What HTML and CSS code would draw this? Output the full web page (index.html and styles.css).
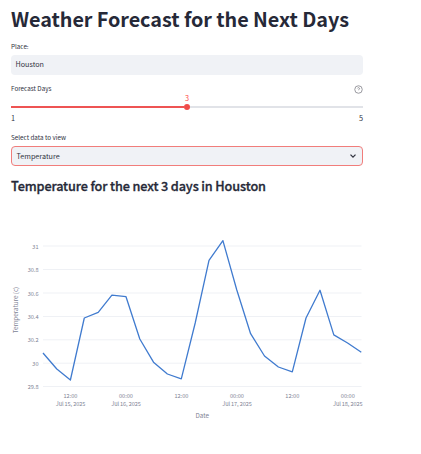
FILE: index.html
```html
<!DOCTYPE html>
<html lang="en">
<head>
<meta charset="utf-8">
<title>Weather Forecast</title>
<link rel="stylesheet" href="styles.css">
</head>
<body>
<main class="page">
  <h1 class="title"><svg class="fit" width="340" height="32"><text x="0" y="22.3" textLength="338">Weather Forecast for the Next Days</text></svg></h1>
  <label class="label" for="place">Place:</label>
  <div class="input" id="place">Houston</div>
  <div class="label-row">
    <span class="label">Forecast Days</span>
    <svg class="help" viewBox="0 0 24 24"><circle cx="12" cy="12" r="10"/><path d="M9.1 9a3 3 0 0 1 5.8 1c0 2-3 3-3 3M12 17h.01"/></svg>
  </div>
  <div class="slider">
    <span class="value">3</span>
    <div class="track"><div class="done"></div><div class="thumb"></div><div class="rest"></div></div>
    <div class="ends"><span>1</span><span>5</span></div>
  </div>
  <div class="label select-label">Select data to view</div>
  <div class="input select"><span>Temperature</span><svg class="chevron" viewBox="0 0 8 8"><path d="M2 2.9 4 4.9l2-2"/></svg></div>
  <h2 class="subtitle"><svg class="fit" width="260" height="24"><text x="0" y="17" textLength="255">Temperature for the next 3 days in Houston</text></svg></h2>
  <svg class="chart" width="360" height="195" viewBox="11 230 360 195">
    <path class="grid" d="M43 246H361.5M43 269.5H361.5M43 293H361.5M43 316.5H361.5M43 339.8H361.5M43 363.2H361.5M43 386.5H361.5"/>
    <g class="ticks y">
      <text x="38.5" y="248.5">31</text><text x="38.5" y="272">30.8</text><text x="38.5" y="295.5">30.6</text><text x="38.5" y="319">30.4</text><text x="38.5" y="342.3">30.2</text><text x="38.5" y="365.7">30</text><text x="38.5" y="389">29.8</text>
    </g>
    <g class="ticks x">
      <text x="70.5" y="398.3">12:00</text><text x="70.5" y="406.3" textLength="29.5">Jul 15, 2025</text>
      <text x="126" y="398.3">00:00</text><text x="126" y="406.3" textLength="29.5">Jul 16, 2025</text>
      <text x="181.4" y="398.3">12:00</text>
      <text x="237" y="398.3">00:00</text><text x="237" y="406.3" textLength="29.5">Jul 17, 2025</text>
      <text x="292.3" y="398.3">12:00</text>
      <text x="347.8" y="398.3">00:00</text><text x="347.8" y="406.3" textLength="29.5">Jul 18, 2025</text>
    </g>
    <text class="axis" x="202.3" y="418" textLength="13.5">Date</text>
    <text class="axis" transform="translate(18 310) rotate(-90)" textLength="46.5">Temperature (c)</text>
    <polyline class="line" points="43,353 56.8,369 70.4,380 84.3,318 98.2,312.4 111.9,295.2 126,296.7 139.8,339 153.5,362.2 167.4,374 181.3,378.8 195.2,323 209,260.3 222.9,240.6 236.8,290 250.6,333.7 264.5,356 278.4,367 292.3,371.8 306,318 320,290.3 333.8,334.9 347.6,343 361.3,352.2"/>
  </svg>
</main>
</body>
</html>
```
FILE: styles.css
```css
* { box-sizing: border-box; }
body {
  margin: 0;
  background: #fff;
  color: #31333f;
  font-family: "Noto Sans CJK SC", "Noto Sans", sans-serif;
}
.page { width: 363px; padding: 5px 0 0 11px; display: flex; flex-direction: column; }
.title, .subtitle { margin: 0; }
.fit { display: block; overflow: visible; fill: #262938; }
.title { height: 36px; font-size: 19.8px; font-weight: 700; }
.label { display: block; height: 11px; line-height: 11px; font-size: 6.3px; white-space: nowrap; }
.input {
  height: 20px;
  margin-top: 3px;
  padding: 0 4.5px;
  border-radius: 4px;
  background: #f0f2f6;
  font-size: 7.2px;
  line-height: 19px;
}
.label-row { display: flex; justify-content: space-between; margin-top: 8px; height: 11px; }
.help { width: 9px; height: 9px; margin-top: 1.5px; fill: none; stroke: #85868d; stroke-width: 2.2; }
.slider { height: 29px; display: flex; flex-direction: column; }
.value { height: 9px; line-height: 9px; text-align: center; font-size: 7.3px; color: #ff4b4b; }
.track { height: 7px; display: flex; align-items: center; margin-top: 0.5px; }
.done, .rest { flex: 1; height: 2px; background: #ee5453; }
.rest { background: #e1e3e8; }
.thumb { width: 6px; height: 6px; border-radius: 50%; background: #f04c4a; }
.ends { display: flex; justify-content: space-between; margin-top: 2.5px; height: 10px; line-height: 10px; font-size: 7.3px; }
.select-label { margin-top: 9px; }
.select { display: flex; justify-content: space-between; align-items: center; border: 1px solid #f17d7b; line-height: 18px; }
.chevron { width: 10px; height: 10px; fill: none; stroke: #31333f; stroke-width: 1; }
.subtitle { height: 24px; margin-top: 8px; font-size: 12.7px; font-weight: 500; }
.subtitle .fit { stroke: #262938; stroke-width: 0.3; }
.chart { margin-top: 32px; overflow: visible; display: block; }
.grid { fill: none; stroke: #eff1f5; stroke-width: 1; }
.ticks { font-size: 5.6px; fill: #808495; }
.y { text-anchor: end; }
.x { text-anchor: middle; }
.axis { font-size: 6.3px; fill: #808495; text-anchor: middle; }
.line { fill: none; stroke: #407bcf; stroke-width: 1.3; stroke-linejoin: round; }
```
